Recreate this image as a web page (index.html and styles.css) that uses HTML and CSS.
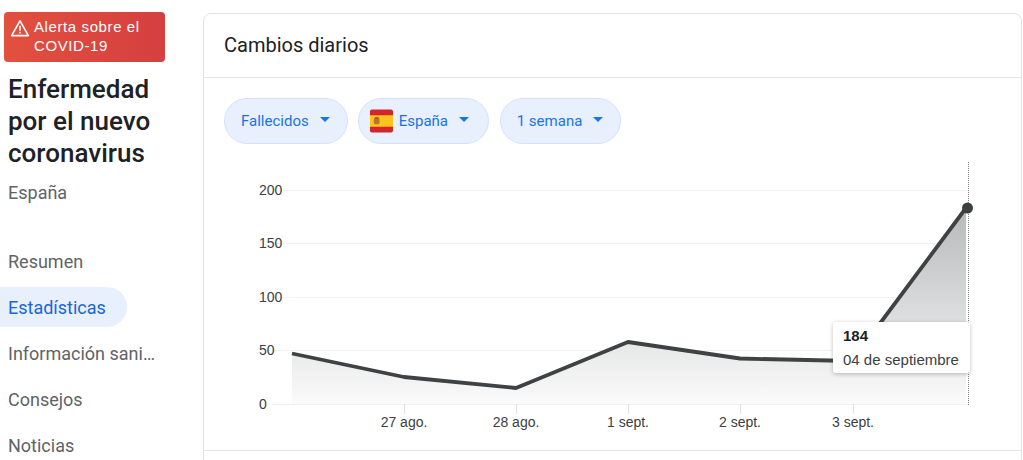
FILE: index.html
```html
<!DOCTYPE html>
<html lang="es">
<head>
    <meta charset="UTF-8">
    <title>Enfermedad por el nuevo coronavirus</title>
    <link rel="stylesheet" href="styles.css">
</head>
<body>
    <div class="page">
        <!-- Barra lateral -->
        <aside class="sidebar">
            <div class="alert">
                <svg class="alert-icon" viewBox="0 0 20 18" width="20" height="18">
                    <path d="M10 1.8 18.4 16.6H1.6Z" fill="none" stroke="#fff" stroke-width="1.6" stroke-linejoin="round"/>
                    <rect x="9.2" y="6.8" width="1.6" height="5" fill="#fff"/>
                    <rect x="9.2" y="12.8" width="1.6" height="1.7" fill="#fff"/>
                </svg>
                <span class="alert-text">Alerta sobre el COVID-19</span>
            </div>
            <h1 class="title">Enfermedad por el nuevo coronavirus</h1>
            <div class="place">España</div>
            <nav class="nav">
                <a class="nav-item">Resumen</a>
                <a class="nav-item active">Estadísticas</a>
                <a class="nav-item">Información sani…</a>
                <a class="nav-item">Consejos</a>
                <a class="nav-item">Noticias</a>
            </nav>
        </aside>

        <!-- Tarjeta principal -->
        <main class="card">
            <div class="card-header">Cambios diarios</div>
            <div class="chips">
                <div class="chip">Fallecidos <span class="caret"></span></div>
                <div class="chip chip-flag">
                    <svg class="flag" viewBox="0 0 24 24" width="23" height="24">
                        <rect width="24" height="24" rx="2" fill="#d2252c"/>
                        <rect y="6" width="24" height="12" fill="#fbc51c"/>
                        <rect x="4" y="8.5" width="6" height="7" rx="2" fill="#b9752f"/>
                        <rect x="5" y="8" width="4" height="2" fill="#c44a35"/>
                    </svg>
                    España <span class="caret"></span>
                </div>
                <div class="chip">1 semana <span class="caret"></span></div>
            </div>
            <div class="chart-wrap">
                <svg class="chart" viewBox="204 150 817 300" width="817" height="300">
                    <defs>
                        <linearGradient id="areaFill" gradientUnits="userSpaceOnUse" x1="0" y1="208" x2="0" y2="404">
                            <stop offset="0" stop-color="#b7b9ba"/>
                            <stop offset="1" stop-color="#fbfbfb"/>
                        </linearGradient>
                    </defs>
                    <g stroke="#f1f1f1" stroke-width="1">
                        <path d="M272 190.5H967M272 243.5H967M272 297.5H967M272 350.5H967M272 404.5H967"/>
                    </g>
                    <g stroke="#e3e3e3" stroke-width="1">
                        <path d="M404.5 404V414M516.5 404V414M628.5 404V414M740.5 404V414M853.5 404V414"/>
                    </g>
                    <path d="M292 353.5 404 377 516 388 628 342 740 358.5 852 361 966 208V404H292Z" fill="url(#areaFill)"/>
                    <path d="M292 353.5 404 377 516 388 628 342 740 358.5 852 361 966 208" fill="none" stroke="#3f4142" stroke-width="3.8" stroke-linejoin="round"/>
                    <line x1="968.5" y1="162" x2="968.5" y2="406" stroke="#808080" stroke-width="1" stroke-dasharray="1 1"/>
                    <circle cx="967.5" cy="208" r="5.5" fill="#3c4043"/>
                    <g class="axis-y">
                        <text x="259" y="195">200</text>
                        <text x="259" y="248">150</text>
                        <text x="259" y="302">100</text>
                        <text x="259" y="355">50</text>
                        <text x="259" y="409">0</text>
                    </g>
                    <g class="axis-x" text-anchor="middle">
                        <text x="404" y="427">27 ago.</text>
                        <text x="516" y="427">28 ago.</text>
                        <text x="628" y="427">1 sept.</text>
                        <text x="740" y="427">2 sept.</text>
                        <text x="853" y="427">3 sept.</text>
                    </g>
                </svg>
                <div class="tooltip">
                    <div class="tooltip-value">184</div>
                    <div class="tooltip-date">04 de septiembre</div>
                </div>
            </div>
            <div class="card-footer"></div>
        </main>
    </div>
</body>
</html>
```

FILE: styles.css
```css
* {
    box-sizing: border-box;
    margin: 0;
    padding: 0;
}

html, body {
    height: 460px;
    overflow: hidden;
    background-color: #fff;
}

body {
    font-family: Roboto, "Liberation Sans", sans-serif;
}

.page {
    display: flex;
    align-items: flex-start;
}

.sidebar {
    width: 203px;
    flex-shrink: 0;
    padding-top: 12px;
}

.alert {
    display: flex;
    width: 161px;
    height: 50px;
    margin-left: 4px;
    padding: 5px 8px 0 6px;
    gap: 4px;
    border-radius: 4px;
    background: linear-gradient(90deg, #e2503e, #d53f40);
    color: #fff;
}

.alert-icon {
    flex-shrink: 0;
    margin-top: 2px;
}

.alert-text {
    font-family: "Liberation Sans", sans-serif;
    font-size: 15px;
    line-height: 19px;
    letter-spacing: 0.6px;
}

.title {
    margin: 11px 0 0 8px;
    width: 170px;
    font-size: 26px;
    font-weight: 500;
    line-height: 32px;
    color: #202124;
}

.place {
    margin: 12px 0 0 8px;
    font-size: 18px;
    line-height: 24px;
    color: #5f6368;
}

.nav {
    display: flex;
    flex-direction: column;
    gap: 6px;
    margin-top: 36px;
}

.nav-item {
    display: block;
    width: 155px;
    height: 40px;
    padding-left: 8px;
    font-size: 18px;
    line-height: 42px;
    color: #5f6368;
    white-space: nowrap;
}

.nav-item.active {
    width: 127px;
    color: #1967d2;
    background-color: #e8f0fe;
    border-radius: 0 20px 20px 0;
}

.card {
    width: 819px;
    height: 470px;
    margin-top: 13px;
    border: 1px solid #e3e4e6;
    border-radius: 8px;
}

.card-header {
    height: 64px;
    padding-left: 20px;
    border-bottom: 1px solid #e6e7e9;
    font-size: 20px;
    line-height: 62px;
    color: #202124;
}

.chips {
    display: flex;
    gap: 11px;
    padding: 20px 0 0 20px;
}

.chip {
    display: flex;
    align-items: center;
    height: 46px;
    padding: 0 17px 0 16px;
    border: 1px solid #d2e3fc;
    border-radius: 23px;
    background-color: #e8f0fe;
    font-size: 15px;
    color: #1a73e8;
    white-space: nowrap;
}

.chip-flag {
    width: 131px;
    margin-left: -1px;
    padding-left: 11px;
}

.flag {
    margin-right: 6px;
}

.caret {
    width: 0;
    height: 0;
    margin-left: 11px;
    margin-top: -3px;
    border-left: 5.5px solid transparent;
    border-right: 5.5px solid transparent;
    border-top: 5.5px solid #1a73e8;
}

.chart-wrap {
    position: relative;
    height: 301px;
    margin-top: 6px;
    border-bottom: 1px solid #e6e7e9;
}

.chart {
    display: block;
}

.axis-y text, .axis-x text {
    font-family: "Liberation Sans", sans-serif;
    font-size: 14px;
    fill: #3c4043;
}

.tooltip {
    position: absolute;
    left: 629px;
    top: 172px;
    width: 137px;
    height: 51px;
    padding: 2px 0 0 10px;
    background-color: #fff;
    border-radius: 3px;
    box-shadow: 0 1px 4px rgba(60, 64, 67, 0.35);
    font-family: "Liberation Sans", sans-serif;
    font-size: 15px;
    line-height: 24px;
    color: #3c4043;
}

.tooltip-value {
    font-weight: bold;
    color: #202124;
}
```
